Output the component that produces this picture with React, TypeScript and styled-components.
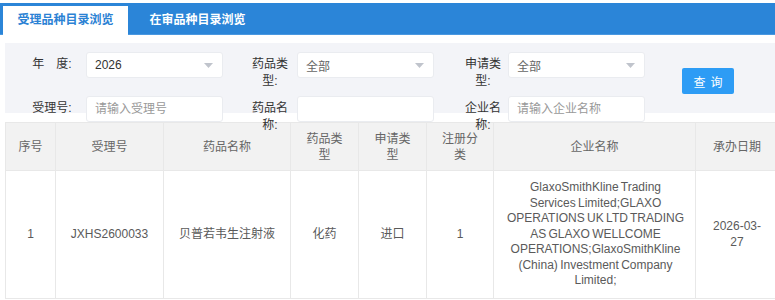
import React from 'react'
import styled, { createGlobalStyle } from 'styled-components'

interface Filter {
    label: string
    kind: 'select' | 'input'
    value?: string
    muted?: boolean
    gap: number
}

interface Row {
    index: number
    acceptNo: string
    drugName: string
    drugType: string
    applyType: string
    regClass: string
    company: string
    date: string
}

const filters: Filter[] = [
    { label: '年\u3000度:', kind: 'select', value: '2026', gap: 14 },
    { label: '药品类型:', kind: 'select', value: '全部', muted: true, gap: 7 },
    { label: '申请类型:', kind: 'select', value: '全部', muted: true, gap: 5 },
    { label: '受理号:', kind: 'input', value: '请输入受理号', gap: 14 },
    { label: '药品名称:', kind: 'input', gap: 7 },
    { label: '企业名称:', kind: 'input', value: '请输入企业名称', gap: 5 },
]

const columns = [
    { title: '序号', width: 50 },
    { title: '受理号', width: 108 },
    { title: '药品名称', width: 127 },
    { title: '药品类型', width: 68 },
    { title: '申请类型', width: 68 },
    { title: '注册分类', width: 67 },
    { title: '企业名称', width: 202 },
    { title: '承办日期', width: 83 },
]

const rows: Row[] = [
    {
        index: 1,
        acceptNo: 'JXHS2600033',
        drugName: '贝普若韦生注射液',
        drugType: '化药',
        applyType: '进口',
        regClass: '1',
        company:
            'GlaxoSmithKline Trading Services Limited;GLAXO OPERATIONS UK LTD TRADING AS GLAXO WELLCOME OPERATIONS;GlaxoSmithKline (China) Investment Company Limited;',
        date: '2026-03-27',
    },
]

const App = () => {
    return (
        <Page>
            <GlobalStyle />
            <TabBar>
                <Tab $active>受理品种目录浏览</Tab>
                <Tab>在审品种目录浏览</Tab>
            </TabBar>
            <Content>
                <FilterPanel>
                    {filters.map((f, i) => (
                        <React.Fragment key={f.label}>
                            <Label $gap={f.gap}>{f.label}</Label>
                            {f.kind === 'select' ? (
                                <Select $muted={f.muted}>
                                    {f.value}
                                    <Arrow width="9" height="5" viewBox="0 0 9 5">
                                        <polygon points="0,0 9,0 4.5,5" fill="#c0c4cc" />
                                    </Arrow>
                                </Select>
                            ) : (
                                <Input placeholder={f.value} />
                            )}
                            {i === 2 && <SearchButton>查询</SearchButton>}
                        </React.Fragment>
                    ))}
                </FilterPanel>
                <Table>
                    <colgroup>
                        {columns.map((c) => (
                            <col key={c.title} style={{ width: c.width }} />
                        ))}
                    </colgroup>
                    <thead>
                        <tr>
                            {columns.map((c) => (
                                <Th key={c.title}>{c.title}</Th>
                            ))}
                        </tr>
                    </thead>
                    <tbody>
                        {rows.map((r) => (
                            <tr key={r.acceptNo}>
                                <Td>{r.index}</Td>
                                <Td>{r.acceptNo}</Td>
                                <Td>{r.drugName}</Td>
                                <Td>{r.drugType}</Td>
                                <Td>{r.applyType}</Td>
                                <Td>{r.regClass}</Td>
                                <Td>
                                    <Company>{r.company}</Company>
                                </Td>
                                <Td>{r.date}</Td>
                            </tr>
                        ))}
                    </tbody>
                </Table>
            </Content>
        </Page>
    )
}

export default App

const GlobalStyle = createGlobalStyle`
    html, body {
        margin: 0;
        overflow: hidden;
        background: #fff;
    }
    body {
        font-family: "Liberation Sans", "Noto Sans CJK SC", sans-serif;
        font-size: 12px;
        color: #333;
    }
`

const Page = styled.div`
    width: 778px;
    padding-top: 3px;
`

const TabBar = styled.div`
    display: flex;
    align-items: flex-end;
    gap: 7px;
    height: 32px;
    padding-left: 3px;
    background: #2b85d8;
    border-bottom: 1px solid #4a98e0;
    box-sizing: border-box;
`

const Tab = styled.div<{ $active?: boolean }>`
    width: 125px;
    height: 29px;
    line-height: 29px;
    text-align: center;
    font-size: 12px;
    font-weight: 700;
    color: ${(p) => (p.$active ? '#2b82d4' : '#fff')};
    background: ${(p) => (p.$active ? '#fff' : 'transparent')};
    margin-bottom: -1px;
`

const Content = styled.div`
    padding-left: 5px;
    margin-top: 8px;
`

const FilterPanel = styled.div`
    display: grid;
    grid-template-columns: 54px 137px 74px 137px 74px 137px 89px;
    grid-template-rows: 26px 26px;
    row-gap: 18px;
    height: 70px;
    box-sizing: border-box;
    padding: 9px 0 0 27px;
    background: #f3f4f8;
`

const Label = styled.div<{ $gap: number }>`
    width: 40px;
    justify-self: end;
    margin-right: ${(p) => p.$gap}px;
    padding-top: 4px;
    line-height: 17px;
    text-align: center;
    font-size: 12px;
    color: #333;
`

const Select = styled.div<{ $muted?: boolean }>`
    display: flex;
    align-items: center;
    justify-content: space-between;
    height: 26px;
    box-sizing: border-box;
    padding: 0 9px 0 8px;
    background: #fff;
    border: 1px solid #eaecf0;
    border-radius: 3px;
    font-size: 12px;
    color: ${(p) => (p.$muted ? '#666' : '#333')};
`

const Arrow = styled.svg`
    display: block;
`

const Input = styled.input`
    height: 26px;
    width: 137px;
    box-sizing: border-box;
    padding: 0 8px;
    background: #fff;
    border: 1px solid #eaecf0;
    border-radius: 3px;
    font: inherit;
    font-size: 12px;
    color: #333;
    outline: none;

    &::placeholder {
        color: #999;
    }
`

const SearchButton = styled.button`
    grid-column: 7;
    grid-row: 1 / span 2;
    justify-self: end;
    align-self: start;
    margin-top: 16px;
    width: 52px;
    height: 26px;
    padding: 0 0 0 5px;
    border: none;
    border-radius: 2px;
    background: #2d9cf5;
    color: #fff;
    font: inherit;
    font-size: 12px;
    letter-spacing: 5px;
`

const Table = styled.table`
    margin-top: 9px;
    width: 773px;
    table-layout: fixed;
    border-collapse: collapse;
    border: 1px solid #e8e8e8;
`

const Th = styled.th`
    height: 47px;
    padding: 0 12px;
    background: #f2f2f2;
    border: 1px solid #e8e8e8;
    font-weight: normal;
    font-size: 12px;
    line-height: 16px;
    color: #666;
    text-align: center;
`

const Td = styled.td`
    height: 127px;
    padding: 0 12px;
    border: 1px solid #e8e8e8;
    font-size: 12px;
    line-height: 15.6px;
    color: #5a5a5a;
    text-align: center;
`

const Company = styled.div`
    width: 179px;
    margin: 0 auto;
    word-spacing: -1px;
`
